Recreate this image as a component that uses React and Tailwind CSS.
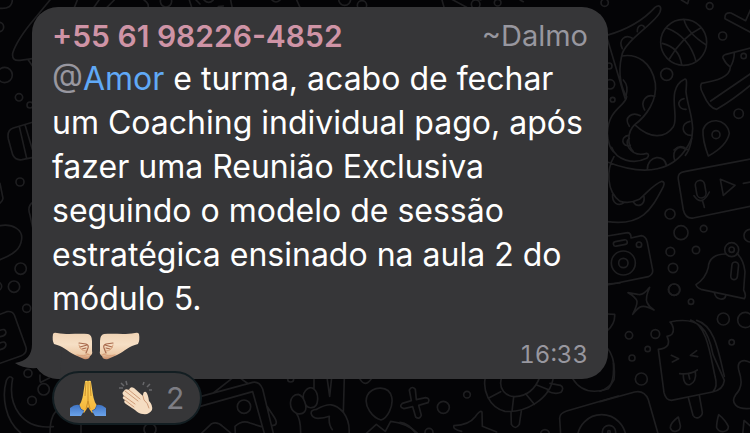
import React from "react";

const message =
  "e turma, acabo de fechar um Coaching individual pago, após fazer uma Reunião Exclusiva seguindo o modelo de sessão estratégica ensinado na aula 2 do módulo 5.";

// Doodles are drawn on a grid three times finer than the page
function Wallpaper() {
  return (
    <svg
      aria-hidden="true"
      className="absolute inset-0 h-full w-full"
      fill="none"
      stroke="#1e1e20"
      strokeWidth="5"
      strokeLinecap="round"
      strokeLinejoin="round"
    >
      {/* Octopus, ball, trainer and pin */}
      <g transform="translate(600 0) scale(.33333)">
        <circle cx="251" cy="127" r="69" />
        <path d="M252 59Q262 100 319 135M187 130Q238 142 245 194M200 84Q268 110 288 184M208 177Q245 112 303 83" />
        <circle cx="14" cy="8" r="11" />
        <circle cx="329" cy="18" r="10" />
        <circle cx="368" cy="108" r="12" />
        <circle cx="200" cy="223" r="18" />
        <circle cx="431" cy="168" r="8" />
        <circle cx="416" cy="341" r="14" />
        <circle cx="348" cy="404" r="12" />
        <circle cx="27" cy="198" r="9" />
        <circle cx="30" cy="253" r="14" />
        <circle cx="38" cy="299" r="7" />
        <path d="M244 0L263 11L267-4M452 28L437 62L393 39Q373 36 375 56L452 97" />
        <path d="M452 144L378 163Q365 168 370 176Q378 193 391 201Q402 184 403 160M391 201C390 232 350 242 305 250Q297 262 310 283Q328 325 350 328Q400 298 452 255M332 303L452 221" />
        <path d="M20 106C95 85 135 55 165 22C178 12 186 20 180 36C168 68 70 125 65 168C52 225 66 268 80 290C78 318 25 325 22 400Q25 440 40 455M22 116L76 298" />
        <path d="M65 168C110 160 155 185 166 250C172 300 140 348 104 374C80 398 82 435 100 455M104 374C150 418 195 416 220 380C240 350 195 265 255 237C263 236 258 265 258 275C262 315 276 340 278 385Q275 445 256 466" />
        <path d="M67 146C54 119 75 102 97 115M112 95C111 76 129 69 134 84M70 240Q87 258 78 288M134 330C119 303 140 281 164 289M88 379C70 352 96 334 121 347M91 436C65 444 59 409 86 406M258 328C235 330 227 300 252 296M275 406C244 408 240 369 270 364M222 450Q241 431 262 449" />
        <path d="M325 468Q307 420 309 390C319 352 380 351 388 400Q380 438 325 468" />
      </g>
      {/* Voice note, camera and bell */}
      <g transform="translate(600 140) scale(.33333)">
        <path d="M42 50C18 90 20 155 60 184Q90 192 118 178C145 155 162 132 186 124Q196 126 190 140C155 205 130 260 22 245M22 66C130 108 230 102 275 -5M35 22C48 60 100 75 140 55Q151 44 140 40Q105 50 87 24Q75 5 88-5M142 89C142 44 196 42 199 77M224 61C214 28 238 14 258 29M38 162C35 190 55 200 72 188M101 187C112 204 136 196 132 170" />
        <path d="M452 57L253 95Q232 98 235 118L250 210Q257 238 280 234L452 199" />
        <rect x="288" y="121" width="28" height="53" rx="14" transform="rotate(-10 302 147)" />
        <path d="M282 167Q306 201 328 156M308 184L313 202M361 118L405 136L370 166ZM430 130L452 126" />
        <circle cx="210" cy="222" r="15" />
        <circle cx="243" cy="278" r="21" />
        <circle cx="311" cy="266" r="10" />
        <circle cx="211" cy="335" r="13" />
        <circle cx="288" cy="330" r="11" />
        <circle cx="219" cy="384" r="14" />
        <circle cx="222" cy="449" r="17" />
        <circle cx="451" cy="287" r="19" />
        <path d="M22 288L83 278Q94 280 93 294L124 287Q138 289 142 307L157 385Q162 402 145 410L22 435" />
        <circle cx="70" cy="369" r="36" />
        <circle cx="70" cy="369" r="14" />
        <circle cx="117" cy="314" r="8" />
        <rect x="40" y="302" width="42" height="14" rx="7" transform="rotate(-11 61 309)" />
        <path d="M376 342C348 342 326 355 325 382Q317 415 288 434Q290 443 303 448L433 476Q440 467 431 450L435 395Q431 360 411 340M343 458C348 482 374 481 377 468" />
        <circle cx="395" cy="329" r="21" />
        <circle cx="395" cy="329" r="8" />
        <rect x="394" y="366" width="20" height="53" rx="10" transform="rotate(6 404 392)" />
      </g>
      {/* Ice lolly and drops */}
      <g transform="translate(600 283) scale(.33333)">
        <path d="M84 29L113 34Q128 40 149 13Q135 45 141 58Q146 70 162 81Q137 67 123 71Q115 73 98 94Q112 66 111 55Q107 41 84 29Z" />
        <circle cx="223" cy="20" r="17" />
        <circle cx="273" cy="56" r="8" />
        <circle cx="370" cy="108" r="18" />
        <circle cx="436" cy="111" r="23" />
        <circle cx="395" cy="178" r="8" />
        <circle cx="87" cy="157" r="11" />
        <circle cx="166" cy="153" r="13" />
        <circle cx="143" cy="198" r="8" />
        <circle cx="96" cy="225" r="9" />
        <circle cx="124" cy="288" r="18" />
        <path d="M210 117C300 98 325 140 339 215L373 292Q370 320 337 327L214 352Q197 351 192 329L175 199Q196 197 204 185Q208 173 201 160Q222 158 220 137Q218 123 210 117ZM272 111C320 126 330 210 345 280Q354 312 339 326" />
        <path d="M290 112C345 128 356 210 373 280" />
        <path d="M214 217L236 227L217 237M290 203L271 217L293 221M239 272Q270 276 292 261M250 275C249 325 294 306 286 267M266 275L269 288M265 344L279 397C289 413 307 401 307 388L298 337" />
        <path d="M235 402Q210 420 211 435C217 452 243 446 241 427ZM356 395Q349 420 350 434C360 454 386 446 385 430Q375 410 356 395ZM432 413L428 455M433 413L455 432M455 241C430 225 410 234 416 260C426 290 428 313 407 335C391 358 407 382 455 376" />
        <path d="M0 356L104 327Q133 321 145 350L175 455M22 93L44 94Q46 122 22 143M22 195C47 225 44 270 42 290Q30 315 0 325M0 5L60 0" />
        <circle cx="5" cy="468" r="73" />
        <circle cx="27" cy="447" r="20" />
        <circle cx="27" cy="447" r="4" />
      </g>
      {/* Picture frame, victory hand and balloon */}
      <g transform="translate(200 363) scale(.33333)">
        <path d="M0 101L158 58Q178 54 188 78L221 215M0 130L158 86L194 215M40 90L100 43M122 46L141 60M202 131L220 158Q240 187 215 188M0 215L35 182Q52 175 68 190L92 210M106 215L105 190Q127 170 150 180L184 191" />
        <circle cx="132" cy="131" r="20" />
        <circle cx="272" cy="48" r="9" />
        <path d="M302 215Q303 170 289 151C262 135 268 94 295 94Q308 98 314 116C325 145 310 157 289 151M314 116C300 90 326 65 342 78C358 93 357 133 335 134Q318 136 314 116M342 78L342 43M381 43L389 100L395 43M433 43L430 148M350 139C385 119 405 120 430 148Q451 177 447 215M350 139C325 139 330 164 354 166Q373 166 388 160Q385 184 397 200" />
        <path d="M543 171C520 165 488 130 502 97C520 67 567 68 575 102C581 130 562 166 543 171ZM498 212L529 184L556 205L572 175Q620 180 652 210M479 47Q495 75 514 47" />
      </g>
      {/* Turtle, star and camera */}
      <g transform="translate(400 363) scale(.33333)">
        <path d="M28 81Q36 67 46 79L49 110L77 104Q92 107 84 119L56 127L64 157Q58 171 47 162L38 131L12 137Q-5 132 7 121L34 113Z" />
        <circle cx="130" cy="133" r="18" />
        <circle cx="201" cy="95" r="10" />
        <circle cx="87" cy="208" r="12" />
        <circle cx="435" cy="213" r="13" />
        <path d="M256 43C248 80 265 132 315 145C375 150 450 110 460 43M305 43C293 79 319 101 345 101C379 99 405 80 419 43M265 106L302 86M341 102L336 145M377 92L403 124M410 66L446 80M450 61L481 67Q494 74 483 88Q465 96 442 84M333 147L334 184Q346 203 358 184L364 144" />
        <path d="M162 188Q207 186 225 162Q240 140 246 147L247 190L290 207M162 188Q157 199 185 205M518 47C540 83 575 94 625 77Q644 55 640 0M482 215L479 166Q478 151 500 144L655 99M0 178Q28 181 50 215" />
      </g>
      {/* Left margin */}
      <g transform="scale(.33333)">
        <path d="M0 25Q36 28 37 0M150 0L105 55Q50 120 38 160Q35 184 60 181L97 176M85 180L98 199M232 0L222 25M297 0L280 25M343 0L318 25M432 0Q450 12 443 25M568 0L576 25M692 0L697 25M655 20L670 18M588 0L600 12M890 0L900 22" />
        <circle cx="498" cy="4" r="17" />
        <circle cx="626" cy="-10" r="17" />
        <circle cx="828" cy="-9" r="15" />
        <circle cx="1034" cy="-2" r="18" />
        <circle cx="1086" cy="16" r="14" />
        <path d="M1326 0L1333 25M1350-5L1400 22M1440 0L1455-5M1560 0L1570 5" />
        <circle cx="1427" cy="13" r="13" />
        <circle cx="1493" cy="8" r="10" />
        <circle cx="-3" cy="81" r="14" />
        <circle cx="14" cy="225" r="23" />
        <circle cx="57" cy="292" r="11" />
        <path d="M100 366L40 384Q20 390 25 417L38 464Q46 482 66 479L100 472M58 380L80 475M75 374L97 448M100 606Q80 618 90 645L98 682M0 677C40 670 68 690 65 717C62 745 45 762 0 779M0 550L9 595Q8 603 0 609" />
        <circle cx="90" cy="315" r="9" />
        <circle cx="60" cy="546" r="12" />
        <circle cx="62" cy="806" r="17" />
        <circle cx="42" cy="860" r="17" />
        <circle cx="-7" cy="859" r="12" />
        <circle cx="80" cy="925" r="12" />
        <path d="M0 943L20 935Q37 932 43 945L78 1042Q82 1060 62 1068L0 1090M0 991Q16 984 18 997Q17 1008 0 1010M0 1029Q16 1021 18 1034Q17 1046 0 1049" />
        <path d="M38 1135Q27 1123 19 1142C5 1190 15 1260 62 1299M38 1135C22 1215 65 1290 160 1280M120 1125Q119 1152 124 1146L148 1134M150 1299Q150 1240 180 1225M243 1299L243 1265" />
        <circle cx="84" cy="1120" r="12" />
        <circle cx="131" cy="1168" r="17" />
        <circle cx="96" cy="1202" r="13" />
        <circle cx="450" cy="1288" r="18" />
      </g>
    </svg>
  );
}

function FistShape() {
  return (
    <>
      <path
        d="M1 2Q2 0 5 1C17 3 25 1 36 2Q40 3 40 9V19Q41 22 38 24Q37 28 32 27L23 23C15 19 11 14 2 12Q0 8 1 2Z"
        fill="url(#skin)"
      />
      <path d="M27 11L34 12Q37 13 36 16L34 21M28 15L35 13M30 17L34 16" fill="none" stroke="#a8694c" strokeWidth="1.2" strokeLinecap="round" />
      <path d="M27 13Q28 19 34 19M35 22L38 23M25 23Q32 25 36 22" fill="none" stroke="#d9a27c" strokeWidth="1" strokeLinecap="round" />
    </>
  );
}

function Fists() {
  return (
    <svg role="img" aria-label="🤛🏻🤜🏻" className="h-7 w-[88px]" viewBox="0 0 88 28">
      <defs>
        <linearGradient id="skin" x1="0" y1="0" x2="0" y2="1">
          <stop offset="0" stopColor="#f0d3b4" />
          <stop offset=".45" stopColor="#f6dfc5" />
          <stop offset=".8" stopColor="#edcba9" />
          <stop offset="1" stopColor="#c98b67" />
        </linearGradient>
      </defs>
      <FistShape />
      <g transform="translate(88 0) scale(-1 1)">
        <FistShape />
      </g>
    </svg>
  );
}

function Pray() {
  return (
    <svg role="img" aria-label="🙏" className="size-9" viewBox="0 0 36 36">
      <defs>
        <linearGradient id="palm" x1="0" y1="0" x2="0" y2="1">
          <stop offset="0" stopColor="#ffd65c" />
          <stop offset="1" stopColor="#f4b43a" />
        </linearGradient>
        <linearGradient id="sleeve" x1="0" y1="0" x2="0" y2="1">
          <stop offset="0" stopColor="#3f74c4" />
          <stop offset="1" stopColor="#6ba3ea" />
        </linearGradient>
      </defs>
      <path d="M15 2Q15 0 18 1Q21 0 21 2L23 15Q24 22 28 27L22 33L18 27L14 33L8 27Q12 22 13 15Z" fill="url(#palm)" />
      <path d="M18 1V21L16 29M18 21L20 29M16 2L15 16M20 2L21 16" fill="none" stroke="#c08322" strokeWidth=".8" />
      <path d="M0 28Q5 24 9 25Q10 30 14 31L11 36H0ZM36 28Q31 24 27 25Q26 30 22 31L25 36H36Z" fill="url(#sleeve)" />
      <path d="M9 25Q10 30 14 31M27 25Q26 30 22 31" fill="none" stroke="#2f62b4" strokeWidth="1" />
    </svg>
  );
}

function Clap() {
  return (
    <svg role="img" aria-label="👏🏻" className="size-9" viewBox="0 0 36 36">
      <path
        d="M6 11Q7 8 11 10Q12 6 16 8L25 16Q25 11 28 12Q30 14 31 21Q35 25 34 30Q31 35 25 34Q21 34 17 30L8 24Q5 22 7 20Q3 18 6 16Q3 13 6 11Z"
        fill="#f5ddc2"
      />
      <path
        d="M11 10L22 19M7 11L20 21M6 16L17 24M7 20L16 27M25 16L26 20Q30 23 31 28"
        fill="none"
        stroke="#c9936f"
        strokeWidth=".9"
        strokeLinecap="round"
      />
      <path d="M3 3L6 6M8 1L9 5M1 8L5 8M25 5L26 2M29 7L32 4M31 10L34 10" stroke="#68686b" strokeWidth="1.5" />
    </svg>
  );
}

function App() {
  return (
    <main className="relative min-h-screen overflow-hidden bg-[#040406] pt-[7px] pb-2 pr-[142px] pl-8 font-[Inter,'Noto_Sans',sans-serif]">
      <Wallpaper />

      {/* Message */}
      <article className="relative rounded-[26px] bg-[#363638] px-5 py-2">
        <svg
          aria-hidden="true"
          className="absolute bottom-0 -left-[17px] h-12 w-12"
          viewBox="0 0 48 48"
          fill="#363638"
        >
          <path d="M17 0V13C17 24 12 30 0 32Q8 38 22 37Q29 46 45 48L48 0Z" />
        </svg>
        <header className="relative flex h-[42px] items-center justify-between whitespace-nowrap text-3xl">
          <h1 className="font-semibold text-[#cf94a6]">+55 61 98226-4852</h1>
          <span className="text-[29px] text-[#98979f]">~Dalmo</span>
        </header>
        <p className="relative text-[32px] leading-[44px] text-white">
          <span className="text-[#98979f]">@</span>
          <a href="#amor" className="text-[#60a9f6]">Amor</a> {message}
        </p>
        <footer className="relative flex h-[50px] items-end justify-between">
          <div className="self-center">
            <Fists />
          </div>
          <time dateTime="16:33" className="text-2xl tabular-nums text-[#98979f]">16:33</time>
        </footer>
      </article>

      {/* Reactions */}
      <button
        type="button"
        className="relative -mt-2 ml-5 flex h-[54px] items-center gap-3 rounded-full border-2 border-[#131e22] bg-[#363638] px-4 text-3xl text-[#7d7d84]"
      >
        <Pray />
        <Clap />
        <span>2</span>
      </button>
    </main>
  );
}

export default App;
